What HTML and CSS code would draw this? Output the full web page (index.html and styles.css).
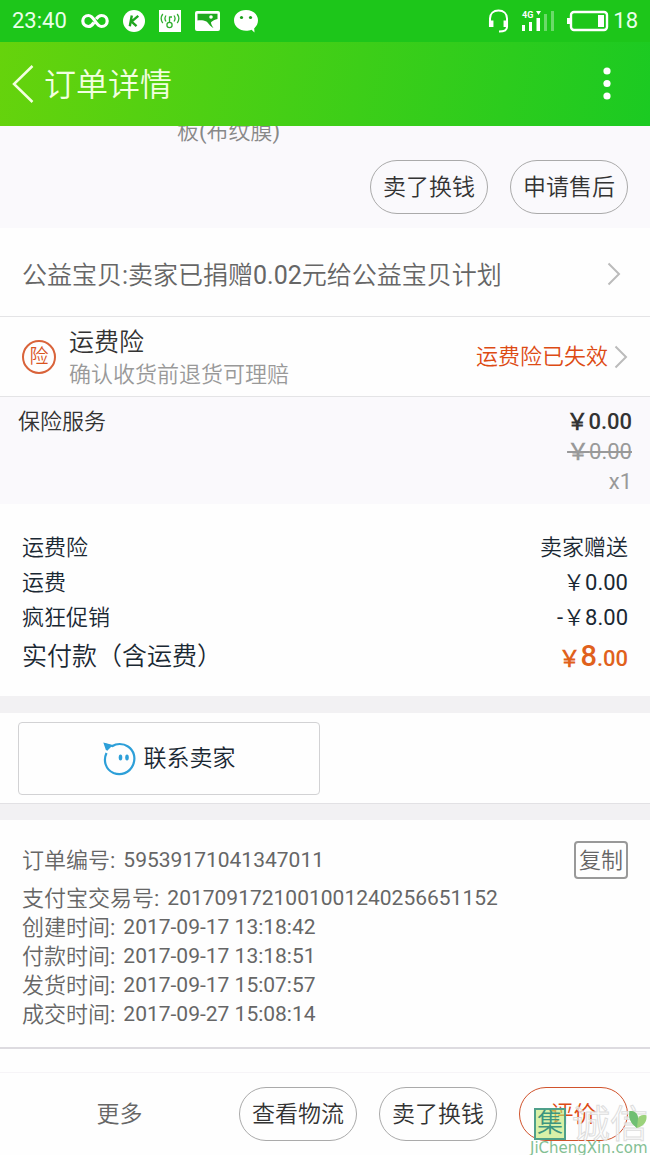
FILE: index.html
```html
<!DOCTYPE html>
<html lang="zh-CN">
<head>
<meta charset="utf-8">
<meta name="viewport" content="width=device-width, initial-scale=1">
<title>订单详情</title>
<link rel="stylesheet" href="styles.css">
</head>
<body>
<div class="status">
  <div class="status-left">
    <span>23:40</span>
    <svg width="28" height="16" viewBox="0 0 28 16" fill="none" stroke="#fff" stroke-width="3.2"><path d="M13 9.500C11 12.500 9.500 13.500 7.500 13.500C4.200 13.500 1.800 11 1.800 8S4.200 2.500 7.500 2.500C13.500 2.500 14.500 13.500 20.500 13.500C23.800 13.500 26.200 11 26.200 8S23.800 2.500 20.500 2.500C18.500 2.500 17 3.500 15.200 6"/></svg>
    <svg width="22" height="22" viewBox="0 0 22 22"><circle cx="11" cy="11" r="11" fill="#fff"/><path d="M8.800 5.500L6.800 16.200M15.300 5.800L8.500 11.500L13.500 16.200" fill="none" stroke="#1fa51f" stroke-width="2.400"/></svg>
    <svg width="22" height="22" viewBox="0 0 22 22"><path d="M0 0H22V22H0Z" fill="#fff"/><g fill="none" stroke="#2fae2f" stroke-width="1.300"><circle cx="10.500" cy="15" r="2.600"/><path d="M10.500 12.500V6.500M10.500 7H13M7 5.500C5.600 7.500 5.600 9.500 7 11.500M3.800 4C1.600 7 1.600 10 3.800 13M15 5.500C16.400 7.500 16.400 9.500 15 11.500M18.200 4C20.400 7 20.400 10 18.200 13"/></g></svg>
    <svg width="25" height="20" viewBox="0 0 25 20"><rect width="25" height="20" rx="2" fill="#fff"/><path d="M2.500 2.800H22.500V8C20 8.500 17.500 10 16 11.200C16 13 17 15 18.500 17C14.500 15 13.500 12 11.500 10.500C8.500 9 5 9 2.500 9.500Z" fill="#1ea91e"/><circle cx="16" cy="6" r="1.800" fill="#fff"/></svg>
    <svg width="24" height="23" viewBox="0 0 24 23"><path d="M12 0C5 0 0 4.500 0 10.300C0 16.500 5.500 20.800 12 20.800C14 20.800 16 20.500 17.500 19.800L20.500 22.500L20.200 18.300C22.700 16.300 24 13.600 24 10.300C24 4.500 19 0 12 0Z" fill="#fff"/><circle cx="7.500" cy="7.500" r="1.600" fill="#1b9e1b"/><circle cx="16.500" cy="7.500" r="1.600" fill="#1b9e1b"/></svg>
  </div>
  <div class="status-right">
    <svg width="21" height="24" viewBox="0 0 21 24" fill="none" stroke="#fff" stroke-width="2"><path d="M2 14V9.500C2 4.500 5.500 1.500 10.500 1.500S19 4.500 19 9.500V18C19 21 16 22.500 11 22.500"/><path d="M3.200 11.500V18M17.800 11.500V18" stroke-width="4.500"/></svg>
    <svg width="34" height="22" viewBox="0 0 34 22"><text class="net" x="1" y="8">4G</text><path d="M15 1H20L17.500 5Z" fill="#fff"/><path d="M1 15H4V21H1ZM8 12H11V21H8ZM15.500 8H19V21H15.500Z" fill="#fff"/><path d="M23 4H26V21H23ZM30 1H33V21H30Z" fill="#fff" fill-opacity=".35"/></svg>
    <span class="battery"><svg width="42" height="22" viewBox="0 0 42 22"><rect x="4" y="2" width="36" height="18" rx="3" fill="none" stroke="#fff" stroke-width="2.400"/><path d="M0 8H3V14H0Z" fill="#fff"/><rect x="31" y="5" width="6" height="12" fill="#fff"/></svg>18</span>
  </div>
</div>
<header class="bar">
  <button class="icon-btn" aria-label="返回"><svg width="22" height="40" viewBox="0 0 22 40" fill="none" stroke="#f2ffe0" stroke-width="2.500"><path d="M20.500 2L2 20L20.500 38"/></svg></button>
  <h1>订单详情</h1>
  <button class="icon-btn" aria-label="菜单"><svg width="8" height="34" viewBox="0 0 8 34" fill="#fff"><circle cx="4" cy="4" r="3.600"/><circle cx="4" cy="16.500" r="3.600"/><circle cx="4" cy="29" r="3.600"/></svg></button>
</header>
<main>
  <section class="item">
    <div class="item-desc"><span>板(布纹膜)</span></div>
    <div class="actions"><button class="pill">卖了换钱</button><button class="pill">申请售后</button></div>
  </section>
  <a class="row charity" href="#charity"><span>公益宝贝:卖家已捐赠0.02元给公益宝贝计划</span><svg class="chev" width="14" height="24" viewBox="0 0 14 24"><path d="M1.500 1.500L12 12L1.500 22.500"/></svg></a>
  <a class="row insure" href="#insurance">
    <span class="badge">险</span>
    <span class="insure-text"><span class="insure-title">运费险</span><span class="insure-sub">确认收货前退货可理赔</span></span>
    <span class="insure-state">运费险已失效</span><svg class="chev" width="14" height="24" viewBox="0 0 14 24"><path d="M1.500 1.500L12 12L1.500 22.500"/></svg>
  </a>
  <section class="service">
    <span>保险服务</span>
    <div class="service-price"><strong><span class="yen">￥</span>0.00</strong><s><span class="yen">￥</span>0.00</s><span class="qty">x1</span></div>
  </section>
  <dl class="totals">
    <div><dt>运费险</dt><dd>卖家赠送</dd></div>
    <div><dt>运费</dt><dd>￥0.00</dd></div>
    <div><dt>疯狂促销</dt><dd>-￥8.00</dd></div>
    <div class="paid"><dt>实付款（含运费）</dt><dd><span class="yen">￥</span><b>8</b>.00</dd></div>
  </dl>
  <section class="contact">
    <button class="contact-btn"><svg width="33" height="34" viewBox="0 0 33 34"><path d="M4 8L2 2L9.500 4C13 1.500 20 1 25 4.500C31 8.500 33 16 30 23C26.500 31 18 34 10.500 31C2.500 27.500 0 18.500 3.500 11" fill="none" stroke="#2d9fd8" stroke-width="2.200"/><path d="M1 1L9.500 3.500L4 9Z" fill="#2d9fd8"/><ellipse cx="17.500" cy="15.500" rx="1.800" ry="3" fill="#2d9fd8"/><ellipse cx="24" cy="15.500" rx="1.800" ry="3" fill="#2d9fd8"/></svg>联系卖家</button>
  </section>
  <section class="order">
    <div class="order-no"><span class="line"><span>订单编号:</span><span class="value">59539171041347011</span></span><button class="copy">复制</button></div>
    <div class="line"><span>支付宝交易号:</span><span class="value">2017091721001001240256651152</span></div>
    <div class="line"><span>创建时间:</span><span class="value">2017-09-17 13:18:42</span></div>
    <div class="line"><span>付款时间:</span><span class="value">2017-09-17 13:18:51</span></div>
    <div class="line"><span>发货时间:</span><span class="value">2017-09-17 15:07:57</span></div>
    <div class="line"><span>成交时间:</span><span class="value">2017-09-27 15:08:14</span></div>
  </section>
</main>
<footer class="footer">
  <button class="more">更多</button>
  <button class="pill">查看物流</button>
  <button class="pill">卖了换钱</button>
  <button class="pill rate">评价</button>
  <div class="mark"><div class="mark-top"><span class="mark-box">集</span><span class="mark-name">诚信</span><svg class="leaf" width="20" height="20" viewBox="0 0 18 19"><path d="M8 18C1 13 0 8 1 2C6 1 9 5 9 9C10 6 13 5 17 6C18 12 14 17 8 18Z" fill="#9bd27b"/><path d="M8 18C1 13 0 8 1 2C6 1 9 5 9 9Z" fill="#6fbf73"/></svg></div><div class="mark-url">JiChengXin.com</div></div>
</footer>
</body>
</html>
```
FILE: styles.css
```css
* { box-sizing: border-box; }
body {
  margin: 0;
  background: #fefefe;
  color: #333;
  font: 22px/30px Roboto, "Noto Sans CJK SC DemiLight", "Noto Sans CJK SC Light", "Noto Sans CJK SC", sans-serif;
  font-weight: 400;
}
button { font: inherit; color: inherit; background: none; border: 0; padding: 0; cursor: pointer; white-space: nowrap; }
a { color: inherit; text-decoration: none; }
svg { display: block; flex: none; }

.status { height: 42px; padding: 0 12px; display: flex; justify-content: space-between; align-items: center; background: #1dc61a; color: #eaffea; }
.status-left, .status-right { display: flex; align-items: center; }
.status-left { gap: 14px; }
.status-right { gap: 12px; }
.battery { display: flex; align-items: center; gap: 4px; }
.net { font: 700 9px Roboto, sans-serif; fill: #fff; }

.bar { height: 84px; padding: 0 39px 0 12px; display: flex; align-items: center; gap: 10px; background: linear-gradient(100deg, #66d30c, #1bca22); color: #f2ffe0; }
.bar h1 { flex: 1; margin: 0; padding-top: 2px; font-size: 32px; line-height: 48px; font-weight: 400; }

.item { background: #faf9fc; padding-bottom: 14px; }
.item-desc { height: 21px; margin-bottom: 13px; padding-left: 177px; display: flex; align-items: flex-end; overflow: hidden; color: #888; }
.actions { display: flex; justify-content: flex-end; gap: 22px; padding-right: 22px; }
.pill { height: 54px; padding: 2px 12px 0; border: 1px solid #aaa; border-radius: 27px; font-size: 23px; color: #333; }

.row { display: flex; align-items: center; border-bottom: 1px solid #e4e4e6; }
.chev { fill: none; stroke: #bbb; stroke-width: 2; }
.charity { height: 89px; padding: 4px 29px 0 22px; justify-content: space-between; font-size: 25px; line-height: 34px; color: #666; }
.charity span { padding-top: 4px; }
.insure { height: 80px; padding: 0 22px; }
.badge { width: 34px; height: 34px; border: 2px solid #d9633a; border-radius: 50%; color: #d9531e; font-size: 19px; line-height: 29px; font-weight: 500; text-align: center; }
.insure-text { flex: 1; margin-left: 13px; padding-top: 4px; display: flex; flex-direction: column; }
.insure-title { font-size: 25px; line-height: 32px; }
.insure-sub { color: #999; line-height: 32px; }
.insure-state { color: #dd4b14; margin-right: 6px; }

.service { display: flex; justify-content: space-between; padding: 10px 18px 7px; background: #faf9fc; }
.service-price { display: flex; flex-direction: column; align-items: flex-end; }
.service-price strong { font-weight: 500; }
.service-price s, .qty { color: #999; }
.yen { font-weight: 700; }

.totals { margin: 0; padding: 26px 22px 17px; color: #1a2833; line-height: 35px; }
.totals div { display: flex; justify-content: space-between; }
.totals dd { margin: 0; }
.totals .paid { line-height: 44px; }
.paid dt { font-size: 25px; }
.totals .paid dd { color: #e0611c; font-weight: 500; padding-top: 4px; line-height: 40px; }
.paid b { font-size: 29px; line-height: 30px; font-weight: 500; }

.contact { display: grid; grid-template-columns: 1fr 1fr; gap: 10px; padding: 9px 18px 8px; border-top: 17px solid #f2f1f3; border-bottom: 1px solid #e2e1e4; }
.contact-btn { height: 73px; display: flex; align-items: center; justify-content: center; gap: 8px; border: 1px solid #d2d2d4; border-radius: 4px; font-size: 23px; color: #1a2833; }

.order { border-top: 16px solid #f2f1f3; border-bottom: 2px solid #dddbe0; padding: 21px 22px 18px; color: #666; line-height: 29px; }
.order-no { display: flex; justify-content: space-between; align-items: center; margin-bottom: 5px; }
.line { display: flex; gap: 8px; }
.value { font-size: 21px; }
.copy { height: 38px; padding: 0 3px; border: 2px solid #999; border-radius: 4px; }

.footer { position: relative; margin-top: 23px; border-top: 1px solid #f6f4f7; padding: 14px 22px 14px 0; display: flex; gap: 22px; }
.more { flex: 1; margin-right: -22px; padding-top: 2px; font-size: 23px; color: #666; }
.rate { width: 109px; border-color: #d0532c; color: #dd4b14; }
.mark { position: absolute; right: 0; bottom: 0; width: 120px; pointer-events: none; }
.mark-top { display: flex; align-items: center; padding-left: 4px; }
.mark-box { width: 32px; height: 32px; border: 2px solid #4fa08a; background: rgba(190, 232, 110, .6); color: #3d9580; font-size: 26px; line-height: 27px; text-align: center; }
.mark-name { margin: 0 -20px 0 6px; font-size: 38px; line-height: 34px; font-weight: 400; color: rgba(255, 255, 255, .7); -webkit-text-stroke: 1px #ddd; }
.leaf { align-self: flex-start; margin-top: 2px; }
.mark-url { font: 15px/14px "DejaVu Sans", sans-serif; color: #83bf93; white-space: nowrap; }
```
